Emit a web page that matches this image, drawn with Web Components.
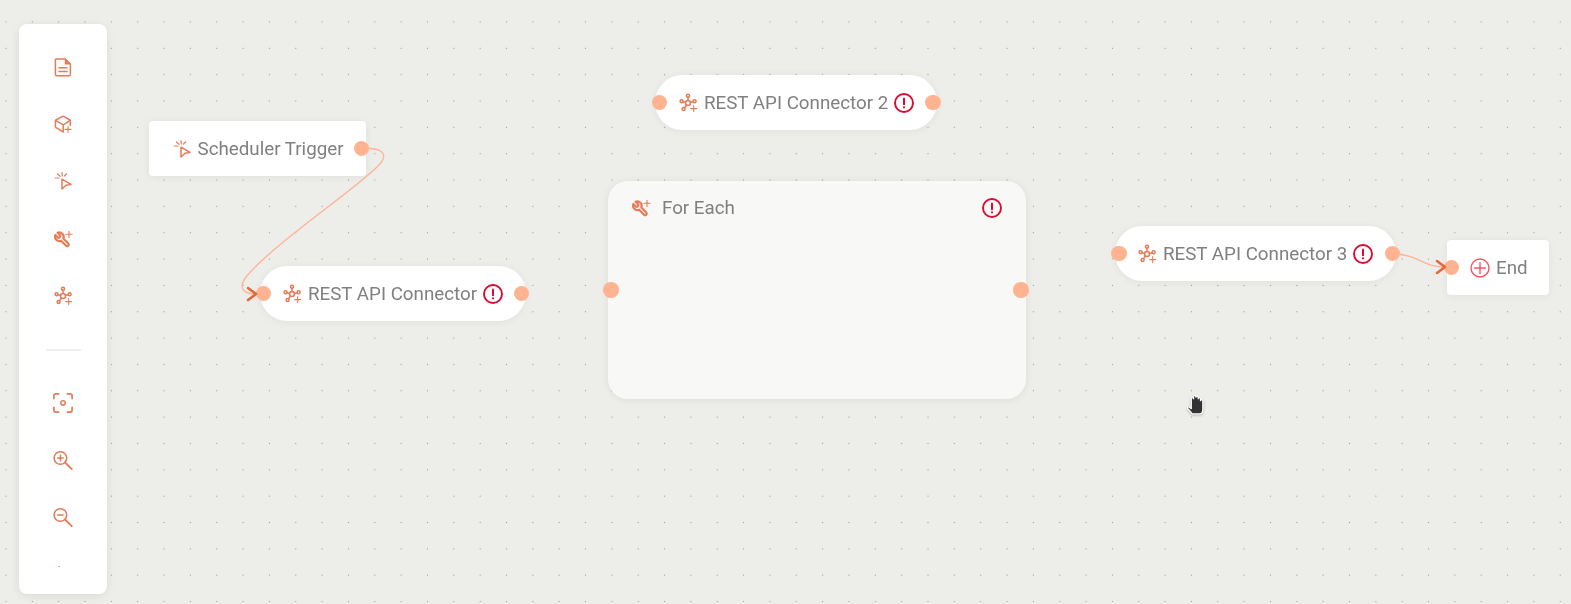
<!DOCTYPE html>
<html lang="en">
<head>
<meta charset="utf-8">
<title>Flow editor</title>
<style>
    html, body { margin: 0; height: 100%; overflow: hidden; }
</style>
</head>
<body>
<flow-canvas>
    <tool-rail slot="rail">
        <flow-icon name="doc"></flow-icon>
        <flow-icon name="cube"></flow-icon>
        <flow-icon name="trigger"></flow-icon>
        <flow-icon name="wrench"></flow-icon>
        <flow-icon name="hub"></flow-icon>
        <flow-icon slot="view" name="focus"></flow-icon>
        <flow-icon slot="view" name="zoom-in"></flow-icon>
        <flow-icon slot="view" name="zoom-out"></flow-icon>
    </tool-rail>

    <flow-node x="148.5" y="121" w="217" h="55" icon="trigger" pad="22.5" handles="right">Scheduler Trigger</flow-node>
    <flow-node x="260" y="266" w="266" h="55" icon="hub" shape="pill" pad="22" error handles="both" inset-l="3.3" inset-r="4.3">REST API Connector</flow-node>
    <flow-node x="655" y="75" w="281.5" h="55" icon="hub" shape="pill" pad="23" error handles="both" inset-l="4.3" inset-r="3.5">REST API Connector 2</flow-node>
    <flow-node x="1115" y="226" w="281" h="55" icon="hub" shape="pill" pad="22" error handles="both" inset-l="4" inset-r="3.3">REST API Connector 3</flow-node>
    <flow-node x="1447" y="240" w="102" h="55" icon="end" pad="23" handles="left" inset-l="4.7">End</flow-node>

    <loop-node x="608" y="180.5" w="417.5" h="218">For Each</loop-node>

    <flow-edges></flow-edges>
    <hand-cursor></hand-cursor>
</flow-canvas>

<script>
const ICONS = {
    doc: `<path d="M3 2h9.2L17.4 7v10.4a1.4 1.4 0 0 1-1.4 1.4H3.8a1.4 1.4 0 0 1-1.4-1.4V2.8z" fill="none"/>
          <path d="M11.8 1.6h.6l5.2 5.2v.6h-5.8z" fill="currentColor" stroke="none"/>
          <path d="M6 10.8h8M6 14.4h8"/>`,
    cube: `<path d="M10.2 17.8 3 13.6a1.2 1.2 0 0 1-.6-1V7a1.2 1.2 0 0 1 .6-1l6.6-3.6a1.2 1.2 0 0 1 1.2 0L16.8 6a1 1 0 0 1 .5 1v4.6"/>
           <path d="m2.6 6.4 7.6 4.4 7-4.4M10.2 10.8v7"/>
           <path d="M15 12.4v6M12 15.4h6" stroke-width="1.1"/>`,
    trigger: `<path d="M9 8.2 18 13.4l-5 .8-4 3.8z" stroke-linejoin="round"/>
              <path d="M2.2 7h3.8M4.4 3l2.6 2.3M9 1.6l.3 3.4M13.7 3l-2.4 2" stroke-width="1.2"/>`,
    wrench: `<g transform="translate(.6 2) scale(-.72 .72) translate(-24 0)" stroke-width="3">
                <path d="M14.7 6.3a1 1 0 0 0 0 1.4l1.6 1.6a1 1 0 0 0 1.4 0l3.77-3.77a6 6 0 0 1-7.94 7.94l-6.91 6.91a2.12 2.12 0 0 1-3-3l6.91-6.91a6 6 0 0 1 7.94-7.94l-3.76 3.76z"/>
             </g>
             <path d="M16 2.2v6.2M12.9 5.3h6.2" stroke-width="1.1"/>`,
    hub: `<circle cx="10" cy="10" r="2.5"/>
          <circle cx="10" cy="2.8" r="1.5"/><circle cx="3.6" cy="8.3" r="1.5"/>
          <circle cx="16.6" cy="8.3" r="1.5"/><circle cx="5.6" cy="16" r="1.5"/>
          <path d="M10 4.3v3.2M5 8.7l2.6.7M15.1 8.7l-2.7.7M6.5 14.8l2-2.8"/>
          <path d="M15.7 12.6v6M12.7 15.6h6" stroke-width="1.1"/>`,
    focus: `<path d="M.9 5.6V2.9a2 2 0 0 1 2-2h2.7M14.4.9h2.7a2 2 0 0 1 2 2v2.7M19.1 14.4v2.7a2 2 0 0 1-2 2h-2.7M5.6 19.1H2.9a2 2 0 0 1-2-2v-2.7" stroke-width="1.7"/>
            <circle cx="10" cy="10" r="2.2"/>`,
    'zoom-in': `<circle cx="7.4" cy="8" r="6.3" stroke-width="1.6"/><path d="m12 12.5 6.8 6.6" stroke-width="1.8"/><path d="M7.4 5.3v5.4M4.7 8h5.4" stroke-width="1.6"/>`,
    'zoom-out': `<circle cx="7.4" cy="8" r="6.3" stroke-width="1.6"/><path d="m12 12.5 6.8 6.6" stroke-width="1.8"/><path d="M4.7 8h5.4" stroke-width="1.6"/>`,
    error: `<circle cx="10" cy="10" r="9" stroke-width="1.9"/><path d="M10 5.4v5.8" stroke-width="2"/><circle cx="10" cy="14.3" r="1.1" fill="currentColor" stroke="none"/>`,
    end: `<circle cx="10" cy="10" r="9" stroke-width="1.4"/><path d="M10 4.6v10.8M4.6 10h10.8" stroke-width="1.4"/>`
};

class FlowIcon extends HTMLElement {
    connectedCallback() {
        const name = this.getAttribute('name');
        this.attachShadow({ mode: 'open' }).innerHTML = `
            <style>
                :host { display: block; width: 20px; height: 20px; flex-shrink: 0; color: var(--icon-color, #e37c58); }
                svg { display: block; width: 100%; height: 100%; fill: none; stroke: currentColor; stroke-width: 1.5; stroke-linecap: round; stroke-linejoin: round; overflow: visible; }
            </style>
            <svg viewBox="0 0 20 20" aria-hidden="true">${ICONS[name] ?? ''}</svg>`;
    }
}

class FlowCanvas extends HTMLElement {
    constructor() {
        super();
        this.attachShadow({ mode: 'open' }).innerHTML = `
            <style>
                :host {
                    display: block;
                    position: relative;
                    width: 1571px;
                    height: 604px;
                    overflow: hidden;
                    font-family: Roboto, "Liberation Sans", sans-serif;
                    background-color: #ededea;
                    background-image: radial-gradient(circle, #9a9a9a 0.6px, transparent 1px);
                    background-size: 26.35px 26.35px;
                    background-position: -7.2px 8.8px;
                }
                .rail { display: block; padding: 24px 0 0 19px; }
            </style>
            <div class="rail"><slot name="rail"></slot></div>
            <slot></slot>`;
    }
}

class ToolRail extends HTMLElement {
    constructor() {
        super();
        this.attachShadow({ mode: 'open' }).innerHTML = `
            <style>
                :host {
                    display: flex;
                    flex-direction: column;
                    align-items: stretch;
                    box-sizing: border-box;
                    width: 88px;
                    height: 570px;
                    padding-top: 14px;
                    background: #fff;
                    border-radius: 8px;
                    box-shadow: 0 2px 10px rgba(0, 0, 0, .08);
                }
                .group { display: flex; flex-direction: column; align-items: center; padding-right: 1px; }
                ::slotted(flow-icon) { margin: 18.7px 0; }
                .sep { height: 2px; width: 35px; margin: 24px auto 42px; background: #eeeeec; }
                .view { display: flex; flex-direction: column; align-items: center; padding-right: 1px; margin-top: -19px; }
                .stub { width: 2px; height: 1px; margin: 20px 0 0 -8px; background: #e2a68f; }
            </style>
            <div class="group"><slot></slot></div>
            <div class="sep"></div>
            <div class="view"><slot name="view"></slot><span class="stub"></span></div>`;
    }
}

// one handle dot, placed by its node
class NodeHandle extends HTMLElement {
    constructor() {
        super();
        this.attachShadow({ mode: 'open' }).innerHTML = `
            <style>
                :host { position: absolute; top: 50%; width: 15.5px; height: 15.5px; margin-top: -7.75px; border-radius: 50%; background: #ffb391; }
            </style>`;
    }
}

class FlowNode extends HTMLElement {
    connectedCallback() {
        const a = n => this.getAttribute(n);
        const pill = a('shape') === 'pill';
        const handles = a('handles') ?? '';
        const left = handles === 'left' || handles === 'both';
        const right = handles === 'right' || handles === 'both';
        const inL = +(a('inset-l') ?? 0);
        const inR = +(a('inset-r') ?? 4.7);
        this.attachShadow({ mode: 'open' }).innerHTML = `
            <style>
                :host {
                    position: absolute;
                    left: ${a('x')}px; top: ${a('y')}px; width: ${a('w')}px; height: ${a('h')}px;
                    box-sizing: border-box;
                    display: flex;
                    align-items: center;
                    gap: 6px;
                    padding-left: ${a('pad')}px;
                    background: #fff;
                    border-radius: ${pill ? '27.5px' : '4px'};
                    box-shadow: 0 1px 8px rgba(0, 0, 0, .06);
                    color: #808080;
                    font-size: 18.75px;
                    line-height: 20px;
                    white-space: nowrap;
                    will-change: transform;
                }
                .err { --icon-color: #dc0a33; }
                .end { --icon-color: #ff5164; }
                .in { left: ${inL - 7.75}px; }
                .out { right: ${inR - 7.75}px; }
            </style>
            ${left ? '<node-handle class="in"></node-handle>' : ''}
            <flow-icon name="${a('icon')}" class="${a('icon')}"></flow-icon>
            <span><slot></slot></span>
            ${this.hasAttribute('error') ? '<flow-icon name="error" class="err"></flow-icon>' : ''}
            ${right ? '<node-handle class="out"></node-handle>' : ''}`;
    }
}

class LoopNode extends HTMLElement {
    connectedCallback() {
        const a = n => this.getAttribute(n);
        this.attachShadow({ mode: 'open' }).innerHTML = `
            <style>
                :host {
                    position: absolute;
                    left: ${a('x')}px; top: ${a('y')}px; width: ${a('w')}px; height: ${a('h')}px;
                    box-sizing: border-box;
                    background: #f8f8f7;
                    border-radius: 20px;
                    box-shadow: 0 1px 8px rgba(0, 0, 0, .07);
                    color: #808080;
                    font-size: 18.75px;
                    line-height: 20px;
                    will-change: transform;
                }
                header { display: flex; align-items: center; gap: 11px; padding: 17px 24px 0 23px; }
                span { flex: 1; }
                .err { --icon-color: #dc0a33; }
                node-handle { top: 108.8px; }
                .in { left: -5px; }
                .out { right: -3.2px; }
            </style>
            <node-handle class="in"></node-handle>
            <header>
                <flow-icon name="wrench"></flow-icon>
                <span><slot></slot></span>
                <flow-icon name="error" class="err"></flow-icon>
            </header>
            <node-handle class="out"></node-handle>`;
    }
}

// connections between nodes, on top of the canvas in page coordinates
class FlowEdges extends HTMLElement {
    constructor() {
        super();
        this.attachShadow({ mode: 'open' }).innerHTML = `
            <style>
                :host { position: absolute; inset: 0; pointer-events: none; }
                svg { display: block; width: 100%; height: 100%; fill: none; stroke-linecap: round; stroke-linejoin: round; }
                .line { stroke: #ffb391; stroke-width: 1.3; }
                .head { stroke: #e4693a; stroke-width: 2.6; }
            </style>
            <svg viewBox="0 0 1571 604">
                <path class="line" d="M361 149C378 147 392 152 378 166C352 192 272 245 246 277C238 288 243 294 256 294"/>
                <path class="head" d="M248 288l8 6l-8 6"/>
                <path class="line" d="M1393 254C1418 254 1422 267 1445 267"/>
                <path class="head" d="M1437 261l8 6l-8 6"/>
            </svg>`;
    }
}

class HandCursor extends HTMLElement {
    constructor() {
        super();
        this.attachShadow({ mode: 'open' }).innerHTML = `
            <style>
                :host { position: absolute; left: 1186px; top: 393.5px; width: 20px; height: 21px; filter: drop-shadow(0 1px 1px rgba(0,0,0,.25)); }
                svg { display: block; width: 100%; height: 100%; }
            </style>
            <svg viewBox="0 0 19 20" aria-hidden="true">
                <path d="M6 19l-4.4-5.2c-.7-.9.3-2 1.3-1.4L5 14V4.6a1.1 1.1 0 0 1 2.2 0V2.4a1.1 1.1 0 0 1 2.2 0v.6a1.1 1.1 0 0 1 2.2 0v1.6a1.1 1.1 0 0 1 2.2 0v1.8a1.1 1.1 0 0 1 2.2 0V14c0 2.8-1.2 5-3 5z" fill="#333" stroke="#fff" stroke-width="1.2" stroke-linejoin="round"/>
            </svg>`;
    }
}

customElements.define('flow-icon', FlowIcon);
customElements.define('flow-canvas', FlowCanvas);
customElements.define('tool-rail', ToolRail);
customElements.define('node-handle', NodeHandle);
customElements.define('flow-node', FlowNode);
customElements.define('loop-node', LoopNode);
customElements.define('flow-edges', FlowEdges);
customElements.define('hand-cursor', HandCursor);
</script>
</body>
</html>
